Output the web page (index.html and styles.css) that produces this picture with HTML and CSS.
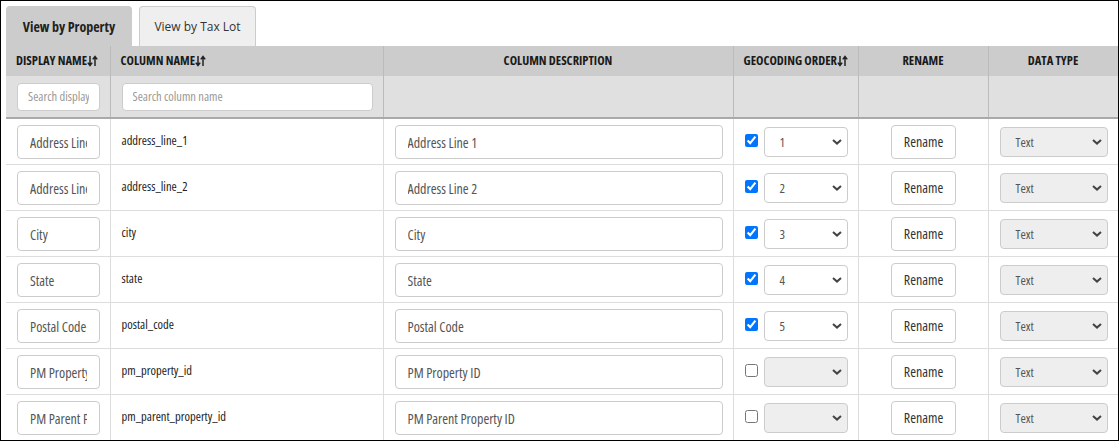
FILE: index.html
```html
<!DOCTYPE html>
<html lang="en">
<head>
<meta charset="utf-8">
<title>Column mappings</title>
<link rel="stylesheet" href="styles.css">
</head>
<body>
<div class="frame">
  <div class="tabs">
    <div class="tab active">View by Property</div>
    <div class="tab">View by Tax Lot</div>
  </div>
  <table class="grid">
    <colgroup>
      <col class="c1"><col class="c2"><col class="c3"><col class="c4"><col class="c5"><col class="c6">
    </colgroup>
    <thead>
      <tr class="head">
        <th class="left">DISPLAY NAME<svg class="sort" viewBox="0 0 11 12" width="11" height="12"><path d="M3 1V10M0.8 7.6L3 10.6L5.2 7.6M8 11V2M5.8 4.4L8 1.4L10.2 4.4" fill="none" stroke="#222" stroke-width="1.5"/></svg></th>
        <th class="left">COLUMN NAME<svg class="sort" viewBox="0 0 11 12" width="11" height="12"><path d="M3 1V10M0.8 7.6L3 10.6L5.2 7.6M8 11V2M5.8 4.4L8 1.4L10.2 4.4" fill="none" stroke="#222" stroke-width="1.5"/></svg></th>
        <th>COLUMN DESCRIPTION</th>
        <th>GEOCODING ORDER<svg class="sort" viewBox="0 0 11 12" width="11" height="12"><path d="M3 1V10M0.8 7.6L3 10.6L5.2 7.6M8 11V2M5.8 4.4L8 1.4L10.2 4.4" fill="none" stroke="#222" stroke-width="1.5"/></svg></th>
        <th>RENAME</th>
        <th>DATA TYPE</th>
      </tr>
      <tr class="filters">
        <td><input class="field search" placeholder="Search display name"></td>
        <td><input class="field search" placeholder="Search column name"></td>
        <td></td><td></td><td></td><td></td>
      </tr>
    </thead>
    <tbody>
      <tr>
        <td><input class="field" value="Address Line 1"></td>
        <td class="name">address_line_1</td>
        <td><input class="field" value="Address Line 1"></td>
        <td><div class="geo"><input type="checkbox" checked><div class="select"><span>1</span><svg viewBox="0 0 10 6" width="10" height="6"><path d="M1 1L5 4.6L9 1" fill="none" stroke="#444" stroke-width="2"/></svg></div></div></td>
        <td class="center"><button class="btn">Rename</button></td>
        <td><div class="select grey"><span>Text</span><svg viewBox="0 0 10 6" width="10" height="6"><path d="M1 1L5 4.6L9 1" fill="none" stroke="#444" stroke-width="2"/></svg></div></td>
      </tr>
      <tr>
        <td><input class="field" value="Address Line 2"></td>
        <td class="name">address_line_2</td>
        <td><input class="field" value="Address Line 2"></td>
        <td><div class="geo"><input type="checkbox" checked><div class="select"><span>2</span><svg viewBox="0 0 10 6" width="10" height="6"><path d="M1 1L5 4.6L9 1" fill="none" stroke="#444" stroke-width="2"/></svg></div></div></td>
        <td class="center"><button class="btn">Rename</button></td>
        <td><div class="select grey"><span>Text</span><svg viewBox="0 0 10 6" width="10" height="6"><path d="M1 1L5 4.6L9 1" fill="none" stroke="#444" stroke-width="2"/></svg></div></td>
      </tr>
      <tr>
        <td><input class="field" value="City"></td>
        <td class="name">city</td>
        <td><input class="field" value="City"></td>
        <td><div class="geo"><input type="checkbox" checked><div class="select"><span>3</span><svg viewBox="0 0 10 6" width="10" height="6"><path d="M1 1L5 4.6L9 1" fill="none" stroke="#444" stroke-width="2"/></svg></div></div></td>
        <td class="center"><button class="btn">Rename</button></td>
        <td><div class="select grey"><span>Text</span><svg viewBox="0 0 10 6" width="10" height="6"><path d="M1 1L5 4.6L9 1" fill="none" stroke="#444" stroke-width="2"/></svg></div></td>
      </tr>
      <tr>
        <td><input class="field" value="State"></td>
        <td class="name">state</td>
        <td><input class="field" value="State"></td>
        <td><div class="geo"><input type="checkbox" checked><div class="select"><span>4</span><svg viewBox="0 0 10 6" width="10" height="6"><path d="M1 1L5 4.6L9 1" fill="none" stroke="#444" stroke-width="2"/></svg></div></div></td>
        <td class="center"><button class="btn">Rename</button></td>
        <td><div class="select grey"><span>Text</span><svg viewBox="0 0 10 6" width="10" height="6"><path d="M1 1L5 4.6L9 1" fill="none" stroke="#444" stroke-width="2"/></svg></div></td>
      </tr>
      <tr>
        <td><input class="field" value="Postal Code"></td>
        <td class="name">postal_code</td>
        <td><input class="field" value="Postal Code"></td>
        <td><div class="geo"><input type="checkbox" checked><div class="select"><span>5</span><svg viewBox="0 0 10 6" width="10" height="6"><path d="M1 1L5 4.6L9 1" fill="none" stroke="#444" stroke-width="2"/></svg></div></div></td>
        <td class="center"><button class="btn">Rename</button></td>
        <td><div class="select grey"><span>Text</span><svg viewBox="0 0 10 6" width="10" height="6"><path d="M1 1L5 4.6L9 1" fill="none" stroke="#444" stroke-width="2"/></svg></div></td>
      </tr>
      <tr>
        <td><input class="field" value="PM Property ID"></td>
        <td class="name">pm_property_id</td>
        <td><input class="field" value="PM Property ID"></td>
        <td><div class="geo"><input type="checkbox"><div class="select grey"><span></span><svg viewBox="0 0 10 6" width="10" height="6"><path d="M1 1L5 4.6L9 1" fill="none" stroke="#444" stroke-width="2"/></svg></div></div></td>
        <td class="center"><button class="btn">Rename</button></td>
        <td><div class="select grey"><span>Text</span><svg viewBox="0 0 10 6" width="10" height="6"><path d="M1 1L5 4.6L9 1" fill="none" stroke="#444" stroke-width="2"/></svg></div></td>
      </tr>
      <tr>
        <td><input class="field" value="PM Parent Property ID"></td>
        <td class="name">pm_parent_property_id</td>
        <td><input class="field" value="PM Parent Property ID"></td>
        <td><div class="geo"><input type="checkbox"><div class="select grey"><span></span><svg viewBox="0 0 10 6" width="10" height="6"><path d="M1 1L5 4.6L9 1" fill="none" stroke="#444" stroke-width="2"/></svg></div></div></td>
        <td class="center"><button class="btn">Rename</button></td>
        <td><div class="select grey"><span>Text</span><svg viewBox="0 0 10 6" width="10" height="6"><path d="M1 1L5 4.6L9 1" fill="none" stroke="#444" stroke-width="2"/></svg></div></td>
      </tr>
    </tbody>
  </table>
</div>
</body>
</html>
```
FILE: styles.css
```css
html, body {
  margin: 0;
  padding: 0;
  background: #fff;
}
body {
  font-family: "Open Sans", "DejaVu Sans Condensed", sans-serif;
  font-stretch: 75%;
  font-size: 13px;
  color: #333;
}
.frame {
  box-sizing: border-box;
  width: 1119px;
  height: 441px;
  border: 1px solid #000;
  padding: 5px 0 0 5px;
  overflow: hidden;
}
.tabs {
  display: flex;
  gap: 7px;
  height: 40px;
}
.tab {
  box-sizing: border-box;
  height: 40px;
  display: flex;
  align-items: center;
  justify-content: center;
  border: 1px solid #ccc;
  border-bottom: 0;
  border-radius: 4px 4px 0 0;
  background: #efefef;
  color: #333;
  width: 117px;
  font-size: 12px;
  font-stretch: 100%;
  padding-bottom: 1px;
}
.tab.active {
  background: #ccc;
  border-color: #ccc;
  font-weight: bold;
  font-size: 14px;
  font-stretch: 75%;
  color: #222;
  width: 126px;
}
.grid {
  width: 1112px;
  table-layout: fixed;
  border-collapse: collapse;
}
.c1 { width: 104px; }
.c2 { width: 273px; }
.c3 { width: 350px; }
.c4 { width: 125px; }
.c5 { width: 130px; }
.c6 { width: 130px; }
.head th {
  background: #ccc;
  height: 30px;
  padding: 0 10px;
  box-sizing: border-box;
  border-left: 1px solid #bbb;
  border-right: 1px solid #bbb;
  font-size: 12.5px;
  font-weight: bold;
  color: #1a1a1a;
  text-align: center;
  white-space: nowrap;
  vertical-align: middle;
  line-height: 14px;
}
.head th:first-child { border-left: 0; }
.head th.left { text-align: left; }
.sort {
  vertical-align: -2px;
  margin-left: 0;
}
.filters td {
  background: #e0e0e0;
  height: 41px;
  padding: 0 10px 0 11px;
  border-left: 1px solid #bbb;
  border-right: 1px solid #bbb;
  border-bottom: 2px solid #aaa;
  vertical-align: middle;
}
.filters td:first-child { border-left: 0; }
tbody td {
  padding: 6px 10px 5px 11px;
  border-left: 1px solid #ddd;
  border-right: 1px solid #ddd;
  border-bottom: 1px solid #ddd;
  vertical-align: middle;
  line-height: 16px;
}
tbody td:first-child { border-left: 0; }
tbody td.name {
  padding-bottom: 7px;
  font-size: 12.5px;
  color: #222;
}
tbody td.center { text-align: center; }
.field {
  display: block;
  box-sizing: border-box;
  width: 100%;
  height: 34px;
  margin: 0;
  padding: 0 12px;
  border: 1px solid #ccc;
  border-radius: 4px;
  background: #fff;
  font: inherit;
  font-size: 14px;
  color: #555;
  outline: none;
}
.field.search {
  height: 28px;
  padding: 0 10px;
  font-size: 12.5px;
}
.field::placeholder { color: #999; }
.geo {
  display: flex;
  align-items: center;
  gap: 6px;
  height: 34px;
}
.geo input[type="checkbox"] {
  margin: 0 0 4px 0;
  width: 13px;
  height: 13px;
  flex: none;
}
.select {
  box-sizing: border-box;
  flex: 1;
  height: 30px;
  display: flex;
  align-items: center;
  justify-content: space-between;
  padding: 0 5px 0 15px;
  border: 1px solid #ccc;
  border-radius: 4px;
  background: #fff;
  color: #555;
  font-size: 13px;
}
td > .select { margin: 2px 0; }
.select.grey { background: #eee; }
.btn {
  display: block;
  margin: 0 auto;
  box-sizing: border-box;
  width: 65px;
  height: 34px;
  border: 1px solid #ccc;
  border-radius: 4px;
  background: #fff;
  font: inherit;
  font-size: 14px;
  color: #333;
  padding: 0;
}
```
